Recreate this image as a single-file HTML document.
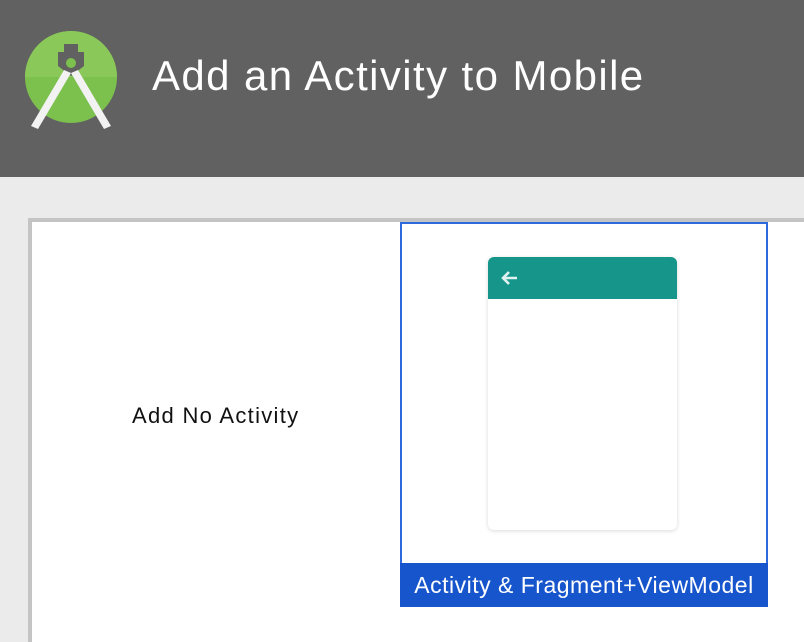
<!DOCTYPE html>
<html><head><style>
body{margin:0;width:804px;height:630px;overflow:hidden;background:#ebebeb;font-family:"Liberation Sans",sans-serif;position:relative}
.hdr{position:absolute;left:0;top:0;width:804px;height:177px;background:#616161}
.title{position:absolute;left:152px;top:52px;color:#fff;font-size:42px;line-height:48px;letter-spacing:1.4px;white-space:nowrap}
.panel{position:absolute;left:28px;top:218px;width:800px;height:420px;background:#fff;border-left:4px solid #c4c4c4;border-top:4px solid #c4c4c4}
.none{position:absolute;left:132px;top:403px;font-size:22px;color:#111;letter-spacing:1.3px;white-space:nowrap}
.sel{position:absolute;left:400px;top:222px;width:364px;height:381px;border:2px solid #2d6bdc;background:#fff}
.bar{position:absolute;left:400px;top:563px;width:368px;height:44px;background:#1755cd;color:#fff;font-size:23px;line-height:44px;text-align:center;letter-spacing:0.5px;white-space:nowrap}
.phone{position:absolute;left:488px;top:257px;width:189px;height:273px;background:#fff;border-radius:6px;box-shadow:0 1px 4px rgba(0,0,0,.15);overflow:hidden}
.tb{height:42px;background:#16968a}
</style></head><body>
<div class="hdr"></div>
<svg style="position:absolute;left:0;top:0" width="140" height="140" viewBox="0 0 140 140">
<circle cx="71" cy="77" r="46" fill="#7cc04e"/>
<path d="M25 77a46 46 0 0 1 92 0z" fill="#8bc85a"/>
<path d="M64 44h14v8h6v14l-13 10-13-10V52h6z" fill="#616161"/>
<circle cx="71" cy="63" r="5" fill="#7cc04e"/>
<path d="M64 70l-33 56 7 3 33-56z" fill="#f2f2f2"/>
<path d="M78 70l33 56-7 3-33-56z" fill="#f2f2f2"/>
</svg>
<div class="title">Add an Activity to Mobile</div>
<div class="panel"></div>
<div class="none">Add No Activity</div>
<div class="sel"></div>
<div class="phone"><div class="tb"><svg width="30" height="42"><path d="M29 21H15M21 15l-6 6 6 6" stroke="#e0f2ef" stroke-width="2.6" fill="none"/></svg></div></div>
<div class="bar">Activity &amp; Fragment+ViewModel</div>
</body></html>
